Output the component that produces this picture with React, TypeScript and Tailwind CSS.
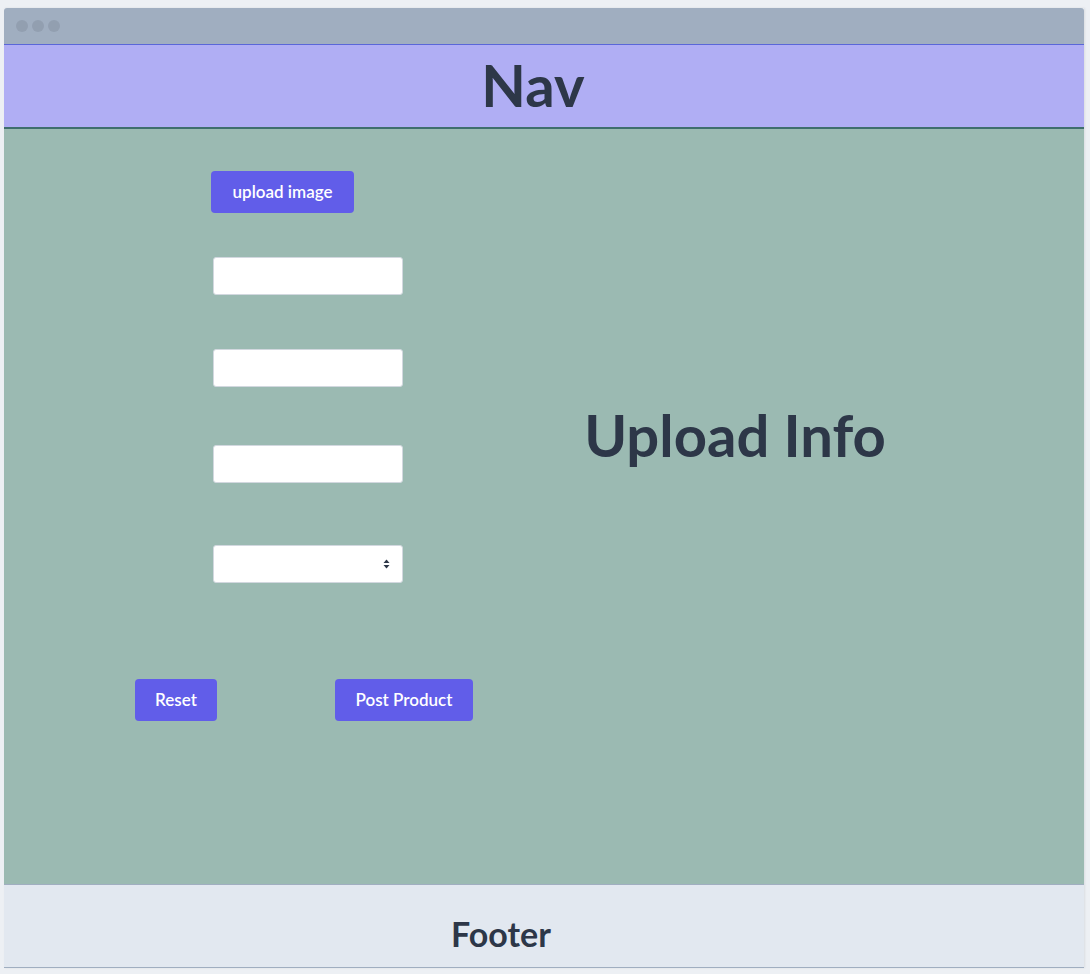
import React from "react";

function Arrows() {
  return (
    <svg width="7" height="12" viewBox="0 0 7 12" className="absolute right-[12px] top-1/2 -translate-y-1/2">
      <path d="M3.5 1.5 L6.5 5 L0.5 5 Z" fill="#2d3748" />
      <path d="M3.5 10.5 L6.5 7 L0.5 7 Z" fill="#2d3748" />
    </svg>
  );
}

export default function App() {
  const font = { fontFamily: "Lato, 'Open Sans', sans-serif" };
  return (
    <div className="min-h-screen bg-[#edf0f4] pt-[8px] pl-[4px] pr-[6px]" style={font}>
      <div className="w-[1080px] shadow-[1px_0_2px_rgba(0,0,0,0.08)]">
        <div className="h-[36px] bg-[#a0aec0] rounded-t-[3px] flex items-center gap-[4px] pl-[12px]">
          <span className="w-[12px] h-[12px] rounded-full bg-[#929fb0]" />
          <span className="w-[12px] h-[12px] rounded-full bg-[#929fb0]" />
          <span className="w-[12px] h-[12px] rounded-full bg-[#929fb0]" />
        </div>
        <div className="border-t border-[#5a67d8] border-b-2 border-b-[#3f6e6d] bg-[#b0aef4] h-[85px] flex items-center justify-center">
          <h1 className="text-[58px] leading-none font-bold text-[#2d3748] mr-[22px] mb-[2px]">Nav</h1>
        </div>
        <main className="h-[755px] bg-[#9bbab2] flex">
          <div className="w-[540px] flex flex-col">
            <button className="mt-[42px] ml-[207px] w-[143px] h-[42px] rounded-[4px] bg-[#615de9] text-white text-[17px] font-semibold">
              upload image
            </button>
            <input className="mt-[44px] ml-[209px] w-[190px] h-[38px] rounded-[3px] bg-white border border-[#d2d8df]" />
            <input className="mt-[54px] ml-[209px] w-[190px] h-[38px] rounded-[3px] bg-white border border-[#d2d8df]" />
            <input className="mt-[58px] ml-[209px] w-[190px] h-[38px] rounded-[3px] bg-white border border-[#d2d8df]" />
            <div className="mt-[62px] ml-[209px] w-[190px] h-[38px] rounded-[3px] bg-white border border-[#d2d8df] relative">
              <Arrows />
            </div>
            <div className="mt-[96px] flex">
              <button className="ml-[131px] w-[82px] h-[42px] rounded-[4px] bg-[#615de9] text-white text-[17px] font-semibold">
                Reset
              </button>
              <button className="ml-[118px] w-[138px] h-[42px] rounded-[4px] bg-[#615de9] text-white text-[17px] font-semibold">
                Post Product
              </button>
            </div>
          </div>
          <div className="w-[382px] flex justify-center">
            <h2 className="mt-[277px] text-[58px] leading-none font-bold text-[#2d3748] whitespace-nowrap">Upload Info</h2>
          </div>
        </main>
        <footer className="border-t border-[#a0aec0] border-b border-b-[#a0aec0] bg-[#e2e8f0] h-[84px] flex items-center justify-center">
          <span className="text-[34px] font-bold text-[#2d3748] mr-[86px] mt-[14px]">Footer</span>
        </footer>
      </div>
    </div>
  );
}
